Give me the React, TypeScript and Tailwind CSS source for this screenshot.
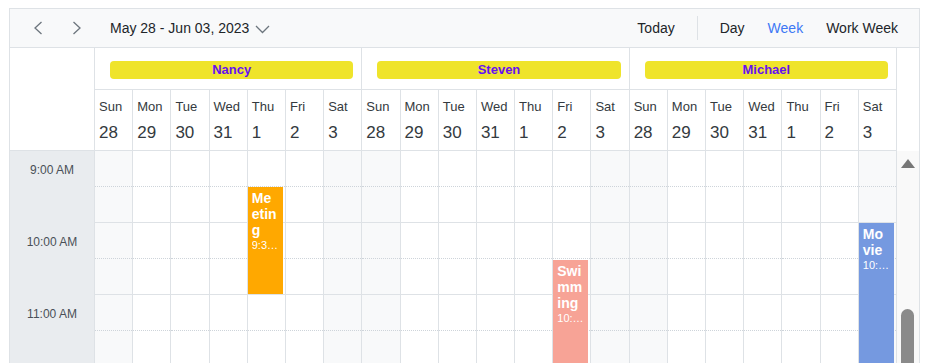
import React from "react";

const days: [string, string][] = [
  ["Sun", "28"],
  ["Mon", "29"],
  ["Tue", "30"],
  ["Wed", "31"],
  ["Thu", "1"],
  ["Fri", "2"],
  ["Sat", "3"],
];
const resources = ["Nancy", "Steven", "Michael"];

type Ev = {
  res: number;
  day: number;
  top: number;
  height: number;
  title: string;
  time: string;
  color: string;
};

const events: Ev[] = [
  { res: 0, day: 4, top: 36, height: 107, title: "Meeting", time: "9:30 AM - 11:00 AM", color: "bg-[#ffa800]" },
  { res: 1, day: 5, top: 109, height: 140, title: "Swimming", time: "10:30 AM - 12:00 PM", color: "bg-[#f7a396]" },
  { res: 2, day: 6, top: 72, height: 180, title: "Movie", time: "10:00 AM - 12:30 PM", color: "bg-[#7599e0]" },
];

const rows = [0, 1, 2, 3, 4, 5];

function ChevronLeft() {
  return (
    <svg width="10" height="14" viewBox="0 0 10 14" fill="none">
      <path d="M8.5 1 L2 7 L8.5 13" stroke="#6c757d" strokeWidth="1.3" />
    </svg>
  );
}
function ChevronRight() {
  return (
    <svg width="10" height="14" viewBox="0 0 10 14" fill="none">
      <path d="M1.5 1 L8 7 L1.5 13" stroke="#6c757d" strokeWidth="1.3" />
    </svg>
  );
}
function ChevronDown() {
  return (
    <svg width="15" height="9" viewBox="0 0 15 9" fill="none">
      <path d="M1 1 L7.5 7.5 L14 1" stroke="#6c757d" strokeWidth="1.3" />
    </svg>
  );
}

export default function App() {
  return (
    <div
      className="h-[363px] w-[937px] overflow-hidden bg-white pt-[8px] pl-[9px] text-[#212529]"
      style={{ fontFamily: '"Liberation Sans", Arial, sans-serif' }}
    >
      <div className="w-[911px] border border-[#dee2e6]">
        {/* Toolbar */}
        <div className="flex h-[39px] items-center border-b border-[#dee2e6] bg-[#f8f9fa] pl-[9px] pr-[21px] text-[14px]">
          <div className="flex h-[30px] w-[38px] items-center justify-center">
            <ChevronLeft />
          </div>
          <div className="flex h-[30px] w-[40px] items-center justify-center">
            <ChevronRight />
          </div>
          <span className="ml-[13px]">May 28 - Jun 03, 2023</span>
          <span className="ml-[6px] mt-[2px] flex">
            <ChevronDown />
          </span>
          <div className="ml-auto flex items-center">
            <span>Today</span>
            <span className="mx-[22px] h-[24px] w-px bg-[#dee2e6]" />
            <span>Day</span>
            <span className="ml-[23px] text-[#3d78f5]">Week</span>
            <span className="ml-[23px]">Work Week</span>
          </div>
        </div>

        {/* Header */}
        <div className="flex">
          <div className="h-[103px] w-[85px] border-b border-r border-[#dee2e6]" />
          <div className="flex w-[802px]">
            {resources.map((r) => (
              <div key={r} className="flex min-w-0 flex-1 flex-col">
                <div className="h-[42px] border-b border-r border-[#dee2e6] pl-[15px] pr-[8px] pt-[13px]">
                  <div className="flex h-[18px] items-center justify-center rounded-[4px] bg-[#efe42b] text-[13px] font-bold text-[#6610f2]">
                    {r}
                  </div>
                </div>
                <div className="flex h-[61px] border-b border-[#dee2e6]">
                  {days.map(([d, n]) => (
                    <div key={d} className="min-w-0 flex-1 border-r border-[#dee2e6] pl-[4px] text-[#343a40]">
                      <div className="mt-[9px] text-[13px] leading-[16px]">{d}</div>
                      <div className="mt-[7px] text-[17px] leading-[22px]">{n}</div>
                    </div>
                  ))}
                </div>
              </div>
            ))}
          </div>
          <div className="w-[22px]" />
        </div>

        {/* Body */}
        <div className="flex">
          <div className="w-[85px] border-r border-[#dee2e6] bg-[#e9ecef]">
            {["9:00 AM", "10:00 AM", "11:00 AM"].map((t) => (
              <div key={t} className="h-[72px] pt-[12px] text-center text-[12px] leading-[14px] text-[#495057]">
                {t}
              </div>
            ))}
          </div>
          <div className="flex w-[802px]">
            {resources.map((r, ri) => (
              <div key={r} className="flex min-w-0 flex-1">
                {days.map(([d], di) => {
                  const weekend = di === 0 || di === 6;
                  const ev = events.find((e) => e.res === ri && e.day === di);
                  return (
                    <div
                      key={d}
                      className={`relative min-w-0 flex-1 border-r border-[#dee2e6] ${weekend ? "bg-[#f8f9fa]" : "bg-white"}`}
                    >
                      {rows.map((i) => (
                        <div
                          key={i}
                          className={
                            i % 2 === 0
                              ? "h-[36px] border-b border-dotted border-[#ced4da]"
                              : "h-[36px] border-b border-[#dee2e6]"
                          }
                        />
                      ))}
                      {ev && (
                        <div
                          className={`absolute left-0 w-[35px] overflow-hidden pl-[4px] pt-[3px] text-white ${ev.color}`}
                          style={{ top: ev.top, height: ev.height }}
                        >
                          <div className="w-[27px] break-all text-[14px] font-bold leading-[16px]">{ev.title}</div>
                          <div className="w-[27px] overflow-hidden text-ellipsis whitespace-nowrap text-[11px] leading-[14px]">
                            {ev.time}
                          </div>
                        </div>
                      )}
                    </div>
                  );
                })}
              </div>
            ))}
          </div>
          {/* Scrollbar */}
          <div className="relative h-[220px] w-[22px] bg-[#f9f9f9]">
            <svg className="absolute left-[3px] top-[6px]" width="16" height="12" viewBox="0 0 16 12">
              <path d="M1 11 L8 2 L15 11 Z" fill="#777" />
            </svg>
            <div className="absolute left-[4px] top-[158px] h-[80px] w-[13px] rounded-full bg-[#8a8a8a]" />
          </div>
        </div>
      </div>
    </div>
  );
}
